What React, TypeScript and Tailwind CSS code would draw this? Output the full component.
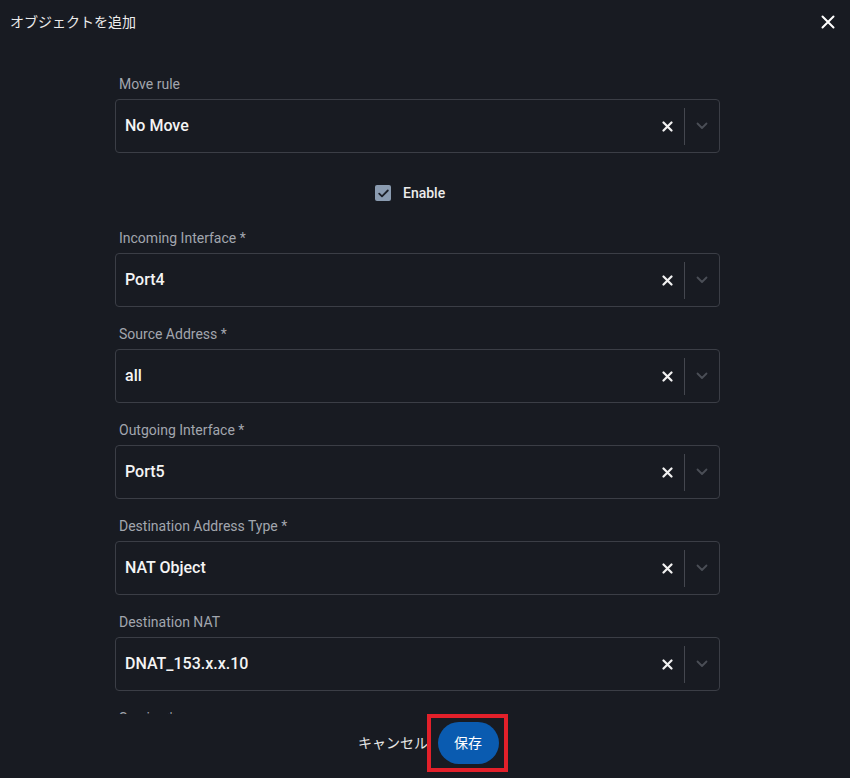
import React from "react";

const FIELDS = [
  { label: "Incoming Interface", required: true, value: "Port4" },
  { label: "Source Address", required: true, value: "all" },
  { label: "Outgoing Interface", required: true, value: "Port5" },
  { label: "Destination Address Type", required: true, value: "NAT Object" },
  { label: "Destination NAT", required: false, value: "DNAT_153.x.x.10" },
];

function ClearIcon() {
  return (
    <svg width="11" height="11" viewBox="0 0 11 11" className="text-[#f2f2f2]">
      <path d="M1.5 1.5 L9.5 9.5 M9.5 1.5 L1.5 9.5" stroke="currentColor" strokeWidth="2.2" strokeLinecap="round" />
    </svg>
  );
}

function Chevron() {
  return (
    <svg width="12" height="8" viewBox="0 0 12 8" className="text-[#4a4e56]">
      <path d="M1.5 1.5 L6 6 L10.5 1.5" stroke="currentColor" strokeWidth="1.8" fill="none" strokeLinecap="round" strokeLinejoin="round" />
    </svg>
  );
}

// ─── Select field ─────────────────────────────────────────────

function SelectBox({ value }: { value: string }) {
  return (
    <div className="flex h-[54px] items-center rounded-[4px] border border-[#3b3e46] bg-[#181b22]">
      <span className="flex-1 pl-[9px] text-[16px] font-medium text-[#f4f4f4]">{value}</span>
      <div className="flex h-full w-[34px] items-center justify-center">
        <ClearIcon />
      </div>
      <div className="h-[37px] w-px bg-[#44474f]" />
      <div className="flex h-full w-[34px] items-center justify-center">
        <Chevron />
      </div>
    </div>
  );
}

function Field({ label, required, value }: { label: string; required?: boolean; value: string }) {
  return (
    <div className="mb-[17px]">
      <div className="mb-[5px] h-5 pl-1 text-[14px] leading-5 text-[#a2a6ae]">
        {label}
        {required && <span> *</span>}
      </div>
      <SelectBox value={value} />
    </div>
  );
}

export default function App() {
  return (
    <div
      className="flex h-[778px] w-full flex-col bg-[#181b22] text-white"
      style={{ fontFamily: 'Roboto, "Noto Sans CJK JP", sans-serif' }}
    >
      {/* Header */}
      <div className="flex h-[44px] shrink-0 items-center justify-between pl-[10px] pr-[15px]">
        <h1 className="text-[14px] text-[#ececec]">オブジェクトを追加</h1>
        <svg width="14" height="14" viewBox="0 0 14 14" className="text-white">
          <path d="M1.5 1.5 L12.5 12.5 M12.5 1.5 L1.5 12.5" stroke="currentColor" strokeWidth="2" strokeLinecap="round" />
        </svg>
      </div>

      {/* Body */}
      <div className="flex-1 overflow-hidden">
        <div className="ml-[115px] w-[605px] pt-[30px]">
          <div className="mb-[5px] h-5 pl-1 text-[14px] leading-5 text-[#a2a6ae]">Move rule</div>
          <SelectBox value="No Move" />

          <div className="mt-[28px] mb-[23px] flex h-6 items-center gap-3 pl-[260px]">
            <span className="flex h-4 w-4 items-center justify-center rounded-[2px] bg-[#8a9bb0]">
              <svg width="11" height="9" viewBox="0 0 11 9">
                <path d="M1.2 4.6 L4 7.3 L9.8 1.5" stroke="#1b1f27" strokeWidth="1.8" fill="none" strokeLinecap="round" strokeLinejoin="round" />
              </svg>
            </span>
            <span className="text-[14px] font-medium text-[#ececec]">Enable</span>
          </div>

          {FIELDS.map((f) => (
            <Field key={f.label} label={f.label} required={f.required} value={f.value} />
          ))}

          <div className="mb-[5px] h-5 pl-1 text-[14px] leading-5 text-[#a2a6ae]">Service *</div>
        </div>
      </div>

      {/* Footer */}
      <div className="flex h-[64px] shrink-0 items-start justify-center pl-[16px]">
        <button className="mt-[19px] pr-[2px] text-[14px] text-[#e6e6e6]">キャンセル</button>
        <div className="-ml-[3px] flex h-[58px] w-[81px] items-center justify-center border-[4px] border-[#e3202a]">
          <button className="ml-[1px] h-[42px] w-[61px] rounded-full bg-[#0a5bb0] text-[14px] text-white">保存</button>
        </div>
      </div>
    </div>
  );
}
